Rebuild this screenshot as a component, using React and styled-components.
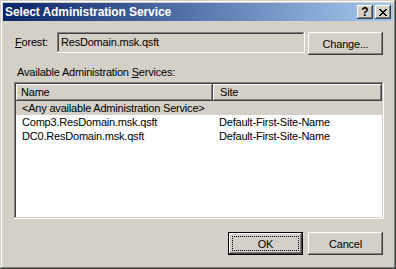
import React from "react";
import styled, { createGlobalStyle, css } from "styled-components";

const Global = createGlobalStyle`
  html, body { margin: 0; padding: 0; background: #d4d0c8; }
  body { font-family: "Liberation Sans", Arial, sans-serif; font-size: 11px; letter-spacing: -0.2px; color: #000; }
  * { box-sizing: border-box; }
`;

const raised = css`
  box-shadow: inset -1px -1px #404040, inset 1px 1px #fff, inset -2px -2px #808080, inset 2px 2px #d4d0c8;
`;

const Window = styled.div`
  width: 396px;
  height: 269px;
  padding: 3px;
  background: #d4d0c8;
  box-shadow: inset -1px -1px #404040, inset 1px 1px #d4d0c8, inset -2px -2px #808080, inset 2px 2px #fff;
  display: flex;
  flex-direction: column;
`;

const TitleBar = styled.div`
  height: 18px;
  flex: none;
  display: flex;
  align-items: center;
  padding: 0 2px 0 2px;
  background: linear-gradient(to right, #0a246a, #a6caf0);
`;

const Title = styled.div`
  flex: 1;
  color: #fff;
  font-weight: bold;
  font-size: 12px;
  letter-spacing: -0.1px;
`;

const CapButtons = styled.div`
  display: flex;
  gap: 2px;
`;

const CapButton = styled.div`
  width: 16px;
  height: 14px;
  background: #d4d0c8;
  ${raised};
  display: flex;
  align-items: center;
  justify-content: center;
  font-weight: bold;
  font-size: 12px;
  line-height: 14px;
  letter-spacing: 0;
  color: #000;
`;

const Body = styled.div`
  flex: 1;
  display: flex;
  flex-direction: column;
  padding: 11px 10px 11px 12px;
`;

const Row = styled.div`
  display: flex;
  align-items: flex-start;
  height: 23px;
`;

const Label = styled.div`
  width: 42px;
  height: 21px;
  line-height: 21px;
`;

const Mn = styled.span`
  text-decoration: underline;
`;

const ReadField = styled.div`
  width: 248px;
  height: 21px;
  line-height: 19px;
  padding: 1px 4px;
  box-shadow: inset -1px -1px #fff, inset 1px 1px #808080, inset -2px -2px #d4d0c8, inset 2px 2px #404040;
  background: #d4d0c8;
`;

const Button = styled.div`
  width: 75px;
  height: 23px;
  margin-left: ${(p) => p.$gap || 0}px;
  display: flex;
  align-items: center;
  justify-content: center;
  position: relative;
  background: #d4d0c8;
  ${(p) =>
    p.$default
      ? css`box-shadow: inset -1px -1px #000, inset 1px 1px #000, inset -2px -2px #404040, inset 2px 2px #fff, inset -3px -3px #808080;`
      : raised}
`;

const Focus = styled.div`
  position: absolute;
  inset: 4px;
  border: 1px dotted #000;
`;

const Caption = styled.div`
  margin: 11px 0 3px 2px;
  height: 13px;
  line-height: 13px;
`;

const ListBox = styled.div`
  margin-left: -1px;
  width: 370px;
  height: 137px;
  padding: 2px;
  background: #fff;
  box-shadow: inset -1px -1px #fff, inset 1px 1px #808080, inset -2px -2px #d4d0c8, inset 2px 2px #404040;
  display: flex;
  flex-direction: column;
`;

const Header = styled.div`
  display: flex;
  height: 17px;
  flex: none;
`;

const HeadCell = styled.div`
  width: ${(p) => p.$w}px;
  flex: ${(p) => (p.$grow ? 1 : "none")};
  height: 17px;
  line-height: 16px;
  padding-left: ${(p) => p.$pad}px;
  background: #d4d0c8;
  ${raised};
`;

const ListRow = styled.div`
  display: flex;
  height: 14px;
  line-height: 14px;
  background: ${(p) => (p.$sel ? "#d4d0c8" : "#fff")};
`;

const Cell = styled.div`
  width: ${(p) => p.$w}px;
  flex: ${(p) => (p.$grow ? 1 : "none")};
  padding-left: 6px;
  white-space: nowrap;
  overflow: ${(p) => (p.$spill ? "visible" : "hidden")};
`;

const Footer = styled.div`
  display: flex;
  justify-content: flex-end;
  margin-top: 13px;
`;

const CloseGlyph = () => (
  <svg width="8" height="7" viewBox="0 0 8 7" shapeRendering="crispEdges">
    <path
      fill="#000"
      d="M0 0h2v1H0zM6 0h2v1H6zM1 1h2v1H1zM5 1h2v1H5zM2 2h4v1H2zM3 3h2v1H3zM2 4h4v1H2zM1 5h2v1H1zM5 5h2v1H5zM0 6h2v1H0zM6 6h2v1H6z"
    />
  </svg>
);

const rows = [
  { name: "<Any available Administration Service>", site: "", sel: true },
  { name: "Comp3.ResDomain.msk.qsft", site: "Default-First-Site-Name" },
  { name: "DC0.ResDomain.msk.qsft", site: "Default-First-Site-Name" },
];

export default function App() {
  return (
    <>
      <Global />
      <Window>
        <TitleBar>
          <Title>Select Administration Service</Title>
          <CapButtons>
            <CapButton>?</CapButton>
            <CapButton>
              <CloseGlyph />
            </CapButton>
          </CapButtons>
        </TitleBar>
        <Body>
          <Row>
            <Label>
              <Mn>F</Mn>orest:
            </Label>
            <ReadField>ResDomain.msk.qsft</ReadField>
            <Button $gap={3}>Change...</Button>
          </Row>
          <Caption>
            Available Administration <Mn>S</Mn>ervices:
          </Caption>
          <ListBox>
            <Header>
              <HeadCell $w={197} $pad={5}>Name</HeadCell>
              <HeadCell $grow $pad={7}>Site</HeadCell>
            </Header>
            {rows.map((r, i) => (
              <ListRow key={i} $sel={r.sel}>
                <Cell $w={197} $spill={r.sel}>{r.name}</Cell>
                <Cell $grow>{r.site}</Cell>
              </ListRow>
            ))}
          </ListBox>
          <Footer>
            <Button $default>
              OK
              <Focus />
            </Button>
            <Button $gap={5}>Cancel</Button>
          </Footer>
        </Body>
      </Window>
    </>
  );
}
